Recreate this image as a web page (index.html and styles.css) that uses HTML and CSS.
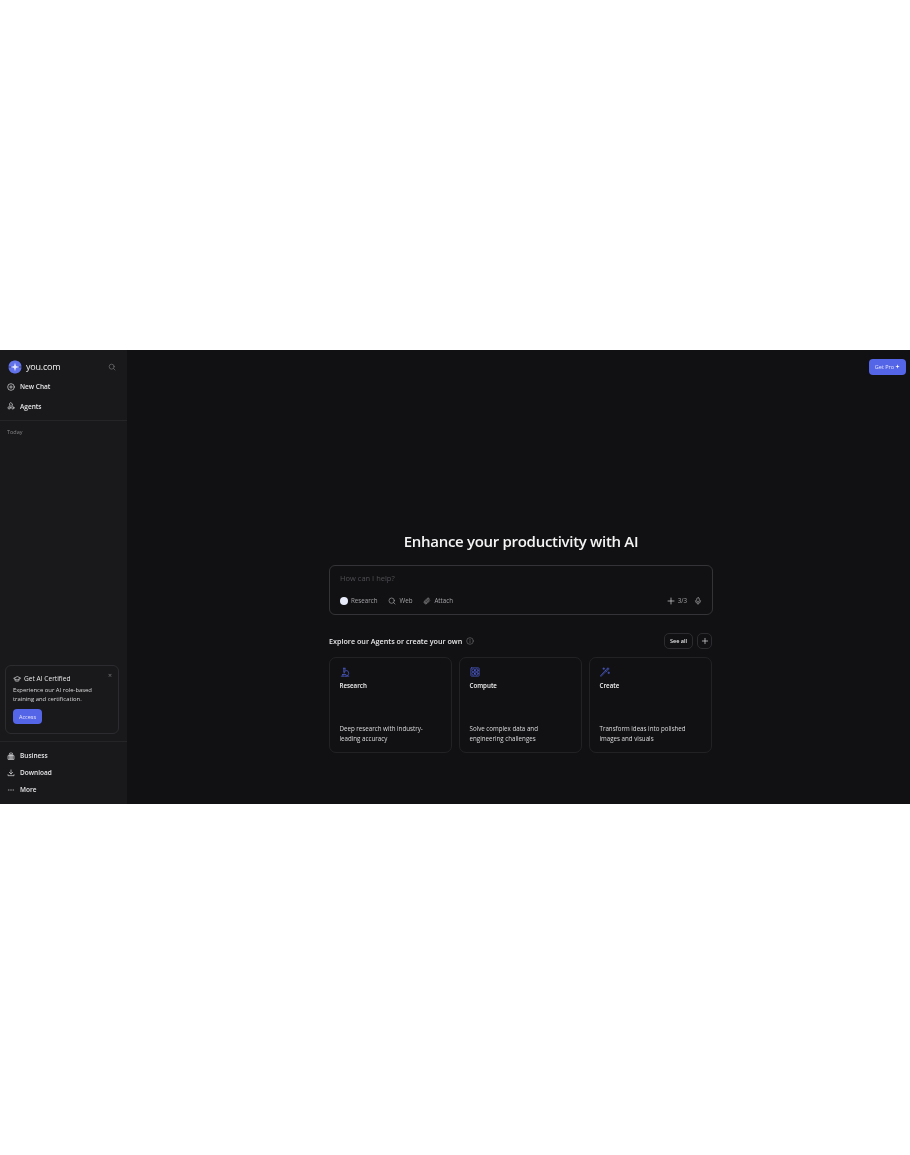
FILE: index.html
```html
<!DOCTYPE html>
<html lang="en">
<head>
    <meta charset="UTF-8">
    <meta name="viewport" content="width=device-width, initial-scale=1.0">
    <title>you.com</title>
    <link rel="stylesheet" href="styles.css">
</head>
<body>
    <div class="app">
        <aside class="sidebar">
            <div class="brand-row">
                <div class="brand">
                    <svg class="logo" viewBox="0 0 14 14"><path d="M7 0.500 C10 0.500 13.500 2.500 13.500 7 C13.500 11.500 10 13.500 7 13.500 C4 13.500 0.500 11.500 0.500 7 C0.500 2.500 4 0.500 7 0.500Z" fill="#6272ea"/><path d="M7 2.800 8 6 11.200 7 8 8 7 11.200 6 8 2.800 7 6 6Z" fill="#dfe4ff"/><path d="M0 7h3M11 7h3" stroke="#15151a" stroke-width=".5"/></svg>
                    <span>you.com</span>
                </div>
                <svg class="icon search-icon" viewBox="0 0 24 24"><circle cx="11" cy="11" r="7.500"/><path d="m17 17 4 4"/></svg>
            </div>
            <a class="nav-item">
                <svg class="icon" viewBox="0 0 24 24"><circle cx="12" cy="12" r="10"/><path d="M12 8v8M8 12h8"/></svg>
                New Chat
            </a>
            <a class="nav-item">
                <svg class="icon" viewBox="0 0 24 24"><path d="M12 2.500l4 3v5l-4 2.500-4-2.500v-5z"/><circle cx="6.500" cy="17.500" r="3.500"/><circle cx="17.500" cy="17.500" r="3.500"/></svg>
                Agents
            </a>
            <div class="divider divider-top"></div>
            <div class="today">Today</div>

            <div class="promo">
                <span class="promo-close">×</span>
                <div class="promo-title">
                    <svg class="icon" viewBox="0 0 24 24"><path d="M12 5 2 10l10 5 10-5z"/><path d="M6 13v4c2 2 10 2 12 0v-4"/></svg>
                    Get AI Certified
                </div>
                <p>Experience our AI role-based training and certification.</p>
                <button class="promo-btn">Access</button>
            </div>

            <div class="divider"></div>
            <div class="bottom-nav">
                <a class="nav-item">
                    <svg class="icon" viewBox="0 0 24 24"><path d="M7 21V6a3 3 0 0 1 3-3h4a3 3 0 0 1 3 3v15"/><path d="M3 21V11h18v10zM11 7v14M13 7v14"/></svg>
                    Business
                </a>
                <a class="nav-item">
                    <svg class="icon" viewBox="0 0 24 24"><path d="M12 3v12M7 10l5 5 5-5M3 17v3h18v-3"/></svg>
                    Download
                </a>
                <a class="nav-item">
                    <svg class="icon" viewBox="0 0 24 24"><path d="M4 12h2M11 12h2M18 12h2"/></svg>
                    More
                </a>
            </div>
        </aside>

        <main class="main">
            <div class="topbar">
                <button class="pro-btn">Get Pro<svg viewBox="0 0 10 10"><path d="M5 0.500 6 4 9.500 5 6 6 5 9.500 4 6 0.500 5 4 4Z" fill="#fff"/></svg></button>
            </div>

            <div class="center">
                <h1>Enhance your productivity with AI</h1>

                <div class="composer">
                    <div class="placeholder">How can I help?</div>
                    <div class="composer-row">
                        <div class="tools">
                            <span class="tool"><span class="research-dot"></span>Research</span>
                            <span class="tool">
                                <svg class="icon" viewBox="0 0 24 24"><circle cx="11" cy="11" r="8"/><path d="m17 17 4 4"/></svg>
                                Web
                            </span>
                            <span class="tool">
                                <svg class="icon" viewBox="0 0 24 24"><path d="M20 11 11.500 19.500a5 5 0 0 1-7-7L13 4a3.300 3.300 0 0 1 4.700 4.700L9.500 16.800a1.600 1.600 0 0 1-2.300-2.300L15 7"/></svg>
                                Attach
                            </span>
                        </div>
                        <div class="tools-right">
                            <span class="tool">
                                <svg class="icon plus" viewBox="0 0 24 24"><path d="M12 3v18M3 12h18"/></svg>
                                3/3
                            </span>
                            <svg class="icon" viewBox="0 0 24 24"><rect x="8" y="2" width="8" height="13" rx="4"/><path d="M4 11a8 8 0 0 0 16 0M12 19v3"/></svg>
                        </div>
                    </div>
                </div>

                <div class="agents-head">
                    <div class="agents-title">
                        Explore our Agents or create your own
                        <svg class="icon" viewBox="0 0 24 24"><circle cx="12" cy="12" r="10"/><path d="M12 11v6M12 7v1"/></svg>
                    </div>
                    <div class="agents-actions">
                        <button class="small-btn">See all</button>
                        <button class="small-btn square">
                            <svg class="icon" viewBox="0 0 24 24"><path d="M12 4v16M4 12h16"/></svg>
                        </button>
                    </div>
                </div>

                <div class="cards">
                    <div class="card">
                        <svg class="card-icon" viewBox="0 0 24 24"><path d="M3 22h18M6 18h8M9 14h2M8 3h4M9 3v9h3V3M14 8a7 7 0 0 1 0 14M7 18v4"/></svg>
                        <div class="card-name">Research</div>
                        <p>Deep research with industry-leading accuracy</p>
                    </div>
                    <div class="card">
                        <svg class="card-icon" viewBox="0 0 24 24"><rect x="2" y="2" width="20" height="20" rx="2"/><circle cx="8" cy="8" r="3.500"/><circle cx="16" cy="8" r="3.500"/><circle cx="8" cy="16" r="3.500"/><circle cx="16" cy="16" r="3.500"/></svg>
                        <div class="card-name">Compute</div>
                        <p>Solve complex data and engineering challenges</p>
                    </div>
                    <div class="card">
                        <svg class="card-icon" viewBox="0 0 24 24"><path d="M3 22 17 8l-2-2L2 20zM13 8l3 3M19 2v5M16.500 4.500h5M21 12v4M19 14h4M9 2v4M7 4h4"/></svg>
                        <div class="card-name">Create</div>
                        <p>Transform ideas into polished images and visuals</p>
                    </div>
                </div>
            </div>
        </main>
    </div>
</body>
</html>
```

FILE: styles.css
```css
:root {
    --bg-color: #111113;
    --side-bg: #19191b;
    --text-color: #f2f2f3;
    --accent-color: #5565e8;
    --border-color: #2c2c30;
}

* {
    margin: 0;
    padding: 0;
    box-sizing: border-box;
    font-family: "Open Sans", "Liberation Sans", sans-serif;
}

body {
    background-color: #fff;
    padding-top: 350px;
    padding-bottom: 351px;
}

.app {
    display: flex;
    height: 454px;
    background-color: var(--bg-color);
    color: var(--text-color);
    filter: blur(0.35px);
}

.icon {
    width: 8px;
    height: 8px;
    flex-shrink: 0;
    fill: none;
    stroke: currentColor;
    stroke-width: 2;
    stroke-linecap: round;
    stroke-linejoin: round;
}

/* sidebar */
.sidebar {
    width: 127px;
    flex-shrink: 0;
    display: flex;
    flex-direction: column;
    background-color: var(--side-bg);
}

.brand-row {
    display: flex;
    align-items: center;
    justify-content: space-between;
    padding: 6px 11px 0 8px;
    height: 27px;
}

.brand {
    display: flex;
    align-items: center;
    gap: 4px;
    font-size: 9px;
    letter-spacing: -0.2px;
}

.logo {
    width: 14px;
    height: 14px;
}

.search-icon {
    color: #77777c;
}

.nav-item {
    display: flex;
    align-items: center;
    gap: 5px;
    padding-left: 7px;
    height: 19.500px;
    font-size: 6.500px;
    font-weight: 600;
    color: #e6e6e8;
}

.divider {
    height: 1px;
    background-color: #252528;
}

.divider-top {
    margin-top: 4px;
}

.today {
    margin: 7px 0 0 7px;
    font-size: 5.500px;
    color: #85858a;
}

.promo {
    position: relative;
    margin: auto 8px 7px 5px;
    height: 69px;
    padding: 8px 7px 0 7px;
    border: 1px solid var(--border-color);
    border-radius: 6px;
}

.promo-close {
    position: absolute;
    top: 5px;
    right: 6px;
    font-size: 7px;
    color: #77777c;
}

.promo-title {
    display: flex;
    align-items: center;
    gap: 3px;
    font-size: 6.600px;
    color: #e6e6e8;
}

.promo p {
    margin-top: 3px;
    font-size: 5.900px;
    line-height: 8.500px;
    color: #d8d8da;
}

.promo-btn {
    display: block;
    margin-top: 6px;
    width: 29px;
    height: 15px;
    border: none;
    border-radius: 4px;
    background-color: var(--accent-color);
    color: #e4e7ff;
    font-size: 5.500px;
    font-weight: 500;
}

.bottom-nav {
    padding: 5px 0 6px;
}

.bottom-nav .nav-item {
    height: 17px;
}

/* main area */
.main {
    flex: 1;
    display: flex;
    flex-direction: column;
    min-width: 0;
}

.topbar {
    display: flex;
    justify-content: flex-end;
    padding: 9px 4px 0 0;
}

.pro-btn {
    display: flex;
    align-items: center;
    justify-content: center;
    gap: 1px;
    width: 37px;
    height: 16px;
    border: none;
    border-radius: 4px;
    background-color: var(--accent-color);
    color: #dfe3ff;
    font-size: 5.500px;
    font-weight: 500;
}

.pro-btn svg {
    width: 5px;
    height: 5px;
    margin-bottom: 2px;
}

.center {
    width: 384px;
    margin: 155px 0 0 202px;
}

h1 {
    text-align: center;
    font-size: 15px;
    font-weight: 600;
    line-height: 22px;
    letter-spacing: -0.3px;
    color: #f5f5f6;
}

.composer {
    margin-top: 13px;
    height: 50px;
    padding: 7px 10px 0;
    border: 1px solid #343438;
    border-radius: 6px;
}

.placeholder {
    font-size: 7.500px;
    line-height: 11px;
    color: #505055;
}

.composer-row {
    display: flex;
    align-items: center;
    justify-content: space-between;
    margin-top: 12px;
}

.tools,
.tools-right {
    display: flex;
    align-items: center;
    gap: 11px;
    color: #a3a3a8;
}

.tools-right {
    gap: 7px;
}

.tool {
    display: flex;
    align-items: center;
    gap: 3px;
    font-size: 6.200px;
}

.research-dot {
    width: 8px;
    height: 8px;
    border-radius: 50%;
    background-color: #e8ecfa;
}

.plus {
    color: #e0e0e2;
}

.agents-head {
    display: flex;
    align-items: center;
    justify-content: space-between;
    margin: 18px 1px 0 0;
}

.agents-title {
    display: flex;
    align-items: center;
    gap: 4px;
    font-size: 7.200px;
    font-weight: 600;
    color: #e8e8ea;
}

.agents-title .icon {
    color: #85858a;
    stroke-width: 1.500;
}

.agents-actions {
    display: flex;
    gap: 4px;
}

.small-btn {
    height: 16px;
    width: 29px;
    background: none;
    border: 1px solid var(--border-color);
    border-radius: 5px;
    color: #e6e6e8;
    font-size: 5.500px;
    font-weight: 600;
}

.small-btn.square {
    width: 15px;
    display: flex;
    align-items: center;
    justify-content: center;
}

.cards {
    display: grid;
    grid-template-columns: repeat(3, 1fr);
    gap: 7px;
    margin: 8px 1px 0 0;
}

.card {
    display: flex;
    flex-direction: column;
    height: 96px;
    padding: 9px 9.500px;
    border: 1px solid #222225;
    border-radius: 7px;
}

.card-icon {
    width: 10px;
    height: 10px;
    fill: none;
    stroke: #5363e0;
    stroke-width: 1.600;
    stroke-linecap: round;
    stroke-linejoin: round;
}

.card-name {
    margin-top: 4px;
    font-size: 6.200px;
    font-weight: 600;
    line-height: 9px;
}

.card p {
    margin-top: auto;
    font-size: 6.200px;
    line-height: 9.500px;
    color: #dcdcde;
}
```
